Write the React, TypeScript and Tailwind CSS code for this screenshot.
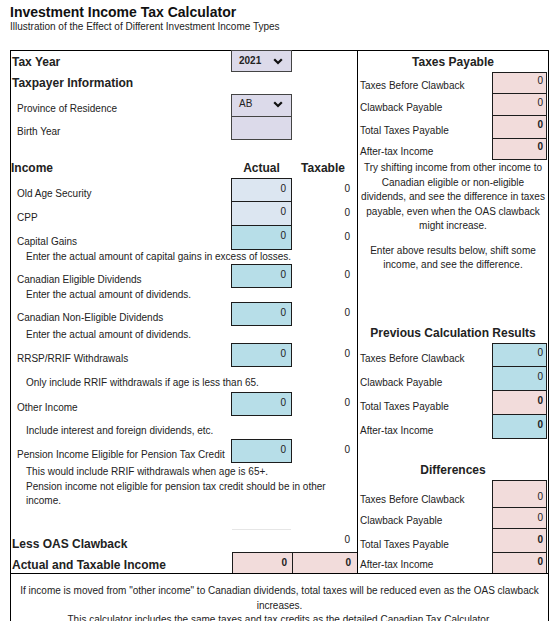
import React from "react";

const cell = "border-[#1c1c1c]";

function Chevron() {
  return (
    <svg width="10" height="7" viewBox="0 0 10 7" className="shrink-0">
      <polyline points="1.2,1.2 5,5 8.8,1.2" fill="none" stroke="#111" strokeWidth="2.2" />
    </svg>
  );
}

function IncomeRow({ label, bg, noTop }: { label: string; bg: string; noTop?: boolean }) {
  return (
    <div className="flex h-[24px]">
      <div className="w-[220px] pl-[6px] pb-[2px] flex items-end">{label}</div>
      <div className={`w-[61px] flex justify-end pt-[4px] pr-[5px] border-x border-b ${noTop ? "" : "border-t"} ${cell} ${bg}`}>0</div>
      <div className="w-[65px] flex justify-end pt-[5px] pr-[7px]">0</div>
    </div>
  );
}

function Note({ children, className }: { children: React.ReactNode; className: string }) {
  return <div className={`pl-[15px] whitespace-nowrap ${className}`}>{children}</div>;
}

function PayRow({
  label,
  row,
  box,
  value,
}: {
  label: string;
  row: string;
  box: string;
  value: string;
}) {
  return (
    <div className={`flex ${row}`}>
      <div className="flex-1 pl-[2px] flex items-end pb-[2px] whitespace-nowrap">{label}</div>
      <div className={`w-[55px] mr-[1px] flex justify-end pr-[3px] border-x border-b ${cell} ${box} ${value}`}>0</div>
    </div>
  );
}

export default function App() {
  return (
    <div className="h-[621px] overflow-hidden bg-white text-[#222] font-['Liberation_Sans',Arial,sans-serif] text-[10px] leading-[12px]">
      {/* heading */}
      <div className="pl-[10px] pt-[3px]">
        <h1 className="text-[14px] leading-[18px] font-bold text-[#111]">Investment Income Tax Calculator</h1>
        <p className="text-[10px] leading-[12px]">Illustration of the Effect of Different Investment Income Types</p>
      </div>

      <div className="ml-[10px] mt-[17px] w-[539px] border border-black">
        <div className="flex border-b border-black">
          {/* left column */}
          <div className="w-[347px] border-r border-black">
            <div className="flex h-[21px]">
              <div className="w-[220px] pl-[1px] flex items-center text-[12px] font-bold">Tax Year</div>
              <div className="w-[61px] -mt-[1px] h-[22px] flex items-center justify-between pl-[7px] pr-[8px] border border-[#444] bg-[#dcdaea] font-bold">
                2021
                <Chevron />
              </div>
            </div>
            <div className="h-[22px] pl-[1px] flex items-center text-[12px] font-bold">Taxpayer Information</div>
            <div className="flex h-[23px]">
              <div className="w-[220px] pl-[6px] pb-[2px] flex items-end">Province of Residence</div>
              <div className="w-[61px] flex items-start justify-between pt-[3px] pl-[7px] pr-[8px] border border-[#444] bg-[#dcdaea]">
                AB
                <span className="mt-[3px]"><Chevron /></span>
              </div>
            </div>
            <div className="flex h-[23px]">
              <div className="w-[220px] pl-[6px] pb-[2px] flex items-end">Birth Year</div>
              <div className="w-[61px] border-x border-b border-[#444] bg-[#dcdaea]" />
            </div>
            <div className="h-[18px]" />
            <div className="flex h-[20px] items-center text-[12px] font-bold leading-[14px]">
              <div className="w-[220px]">Income</div>
              <div className="w-[61px] text-center">Actual</div>
              <div className="w-[65px] text-center pr-[3px]">Taxable</div>
            </div>
            <IncomeRow label="Old Age Security" bg="bg-[#dce6f1]" />
            <IncomeRow label="CPP" bg="bg-[#dce6f1]" noTop />
            <IncomeRow label="Capital Gains" bg="bg-[#b7dee8]" noTop />
            <Note className="h-[14px] pt-[1px]">Enter the actual amount of capital gains in excess of losses.</Note>
            <IncomeRow label="Canadian Eligible Dividends" bg="bg-[#b7dee8]" />
            <Note className="h-[14px] pt-[1px]">Enter the actual amount of dividends.</Note>
            <IncomeRow label="Canadian Non-Eligible Dividends" bg="bg-[#b7dee8]" />
            <Note className="h-[17px] pt-[3px]">Enter the actual amount of dividends.</Note>
            <IncomeRow label="RRSP/RRIF Withdrawals" bg="bg-[#b7dee8]" />
            <Note className="h-[25px] flex items-end pb-[3px]">Only include RRIF withdrawals if age is less than 65.</Note>
            <IncomeRow label="Other Income" bg="bg-[#b7dee8]" />
            <Note className="h-[23px] flex items-end pb-[2px]">Include interest and foreign dividends, etc.</Note>
            <IncomeRow label="Pension Income Eligible for Pension Tax Credit" bg="bg-[#b7dee8]" />
            <Note className="h-[46px] pt-[2px] leading-[14.5px]">
              This would include RRIF withdrawals when age is 65+.
              <br />
              Pension income not eligible for pension tax credit should be in other
              <br />
              income.
            </Note>
            <div className="h-[20px]" />
            <div className="flex h-[23px]">
              <div className="w-[220px] pl-[1px] pb-[1px] flex items-end text-[12px] leading-[14px] font-bold">Less OAS Clawback</div>
              <div className="w-[61px] px-[1px]">
                <div className="border-t border-[#e6e6e6]" />
              </div>
              <div className="w-[65px] flex justify-end pt-[5px] pr-[7px]">0</div>
            </div>
            <div className="flex h-[21px]">
              <div className="w-[221px] pl-[1px] pb-[1px] flex items-end text-[12px] leading-[14px] font-bold">Actual and Taxable Income</div>
              <div className={`w-[60px] flex items-center justify-end pr-[5px] border-t border-l ${cell} bg-[#f2dcdb] font-bold`}>0</div>
              <div className={`w-[65px] flex items-center justify-end pr-[6px] border-t border-l ${cell} bg-[#f2dcdb] font-bold`}>0</div>
            </div>
          </div>

          {/* right column */}
          <div className="flex-1">
            <div className="h-[21px] flex items-center justify-center text-[12px] leading-[14px] font-bold">Taxes Payable</div>
            <PayRow label="Taxes Before Clawback" row="h-[22px]" box="border-t bg-[#f2dcdb]" value="pt-[2px]" />
            <PayRow label="Clawback Payable" row="h-[22px]" box="bg-[#f2dcdb]" value="pt-[3px]" />
            <PayRow label="Total Taxes Payable" row="h-[23px]" box="bg-[#f2dcdb]" value="pt-[3px] font-bold" />
            <PayRow label="After-tax Income" row="h-[21px]" box="bg-[#f2dcdb]" value="pt-[2px] font-bold" />
            <div className="h-[162px] pt-[1px] text-center leading-[14.5px]">
              <p>
                Try shifting income from other income to
                <br />
                Canadian eligible or non-eligible
                <br />
                dividends, and see the difference in taxes
                <br />
                payable, even when the OAS clawback
                <br />
                might increase.
              </p>
              <p className="mt-[10px]">
                Enter above results below, shift some
                <br />
                income, and see the difference.
              </p>
            </div>
            <div className="h-[21px] pt-[4px] text-center text-[12px] leading-[14px] font-bold">Previous Calculation Results</div>
            <PayRow label="Taxes Before Clawback" row="h-[24px]" box="border-t bg-[#b7dee8]" value="pt-[3px]" />
            <PayRow label="Clawback Payable" row="h-[24px]" box="bg-[#b7dee8]" value="pt-[4px]" />
            <PayRow label="Total Taxes Payable" row="h-[24px]" box="bg-[#f2dcdb]" value="pt-[4px] font-bold" />
            <PayRow label="After-tax Income" row="h-[24px]" box="bg-[#b7dee8]" value="pt-[4px] font-bold" />
            <div className="h-[41px] flex items-end justify-center pb-[3px] text-[12px] leading-[14px] font-bold">Differences</div>
            <PayRow label="Taxes Before Clawback" row="h-[28px]" box="border-t bg-[#f2dcdb]" value="pt-[10px]" />
            <PayRow label="Clawback Payable" row="h-[21px]" box="bg-[#f2dcdb]" value="pt-[4px]" />
            <PayRow label="Total Taxes Payable" row="h-[24px]" box="bg-[#f2dcdb]" value="pt-[5px] font-bold" />
            <PayRow label="After-tax Income" row="h-[20px]" box="border-b-0 bg-[#f2dcdb]" value="pt-[3px] font-bold" />
          </div>
        </div>

        {/* footer note */}
        <div className="pt-[10px] pb-[8px] text-center leading-[14.5px]">
          <p>
            <span className="whitespace-nowrap">If income is moved from "other income" to Canadian dividends, total taxes will be reduced even as the OAS clawback</span>
            <br />
            increases.
          </p>
          <p>This calculator includes the same taxes and tax credits as the detailed Canadian Tax Calculator.</p>
        </div>
      </div>
    </div>
  );
}
